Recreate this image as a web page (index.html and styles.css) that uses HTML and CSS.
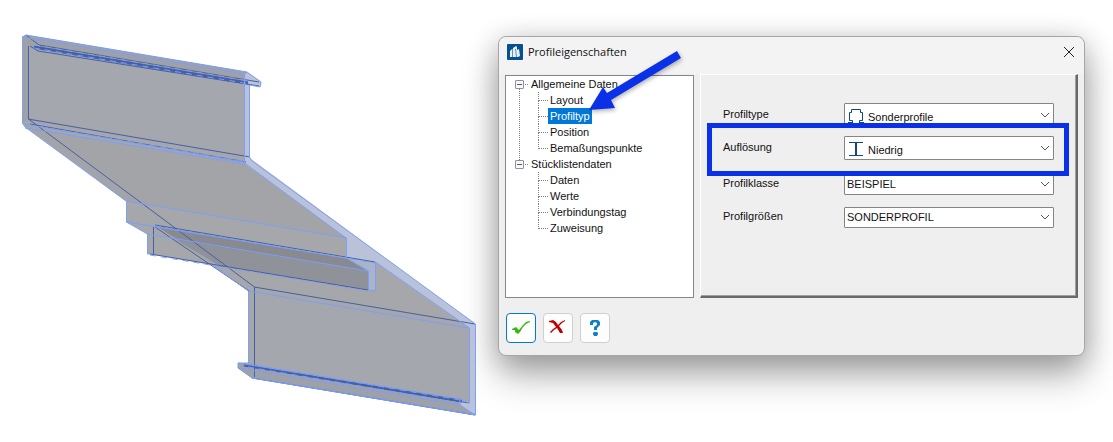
FILE: index.html
```html
<!DOCTYPE html>
<html lang="de">
<head>
    <meta charset="utf-8">
    <title>Profileigenschaften</title>
    <link rel="stylesheet" href="styles.css">
</head>
<body>
    <!-- 3D view of the profile -->
    <svg class="model" width="490" height="430" viewBox="0 0 490 430" role="img" aria-label="Sonderprofil">
        <!-- surfaces -->
        <path fill="#a5a7aa" d="M22 37L26 35L247 72L261 82L260 87L250 85V160L475 324V415L252 378L238 368V363L248 363V291L212 265L150 254H147V234L126 222V201L25 127L22 123Z"/>
        <path fill="#a4a7ae" d="M28 46L244 84V158L28 119ZM254 291L469 328V400L254 364Z"/>
        <path fill="#9fa1a4" d="M22 37L26 35L247 72L244 82L28 46V119L22 123ZM238 363L460 399L475 415L252 378L238 368Z"/>
        <path fill="#a2a4a7" d="M28 127L244 164L346 238L126 201Z"/>
        <path fill="#888a90" d="M156 226L346 258L368 271V290L220 266Z"/>
        <path fill="#909299" d="M176 240L368 271V290L220 266Z"/>
        <path fill="#b9c2d9" d="M244 75L247 72L261 82L260 87L250 85V158L475 324V415L460 405V399L469 403V328L375 262L346 258V238L244 163Z"/>
        <path fill="#a9b3cc" d="M346 258L375 262V291L368 290V271Z"/>
        <!-- hidden and inner edges -->
        <g class="edge-dark">
            <path d="M28.500 46V119L254.500 287V378M28 119L250 157M30 124L246 162M26 35L39 45L259 82"/>
            <path d="M30 46L38 51L259 86M153.500 254V226M155 225L375 262M150 254L368 290M155 227L249 291"/>
            <path d="M254 287L475 324M252 378L475 415M244 365L469 403"/>
        </g>
        <g class="bundle-dark">
            <path d="M34 47L248 83M244 365L462 401"/>
        </g>
        <!-- visible edges -->
        <g class="edge-light">
            <path d="M126 201L25 127L22.500 123V37L26 35L247 72L261 82L260 87L250 85M249.500 85V157L252 161L475.500 324V415L252 378L238 368V363L248.500 363V291L212 265"/>
            <path d="M22 37L244 74M244.500 74V163L346 238M24 124L244 162M25 128L246 164M247 72L244 75"/>
            <path d="M126.500 201V222L147.500 234V254H150M126 201L346.500 238V258L368.500 271V290L375.500 291V262L469.500 328V403M126 222L346 258M147 234L368 271"/>
            <path d="M249 291L469 328M238 363L460 399L469 403M238 368L460 405L475 415M460 399V405"/>
        </g>
        <g class="edge-dashed">
            <path d="M34 48L250 84M34 45L250 81M155 226L375 263M150 255L368 291M252 377L475 414M248 364L460 400M248 367L460 403M30 125L244 161"/>
        </g>
    </svg>

    <main class="dialog">
        <header class="titlebar">
            <svg class="logo" width="16" height="16" viewBox="0 0 16 16">
                <rect width="16" height="16" rx="1" fill="#07508f"/>
                <path fill="#e8f0f8" d="M3 13V7L5 5L6 6V4L9 2L10 3V6L12 5L13 12L11 13Z"/>
                <path fill="none" stroke="#5f8fbd" d="M5.500 6V13M8.500 5L9.500 13"/>
            </svg>
            <h1>Profileigenschaften</h1>
            <button type="button" class="close" aria-label="Schließen">
                <svg width="12" height="12" viewBox="0 0 12 12"><path d="M1 1L11 11M11 1L1 11"/></svg>
            </button>
        </header>

        <div class="content">
            <nav class="tree">
                <ul>
                    <li>
                        <button type="button" class="toggle" aria-label="Allgemeine Daten einklappen"></button><a href="#allgemein">Allgemeine Daten</a>
                        <ul>
                            <li><a href="#layout">Layout</a></li>
                            <li><a href="#profiltyp" class="selected">Profiltyp</a></li>
                            <li><a href="#position">Position</a></li>
                            <li><a href="#punkte">Bemaßungspunkte</a></li>
                        </ul>
                    </li>
                    <li>
                        <button type="button" class="toggle" aria-label="Stücklistendaten einklappen"></button><a href="#stueckliste">Stücklistendaten</a>
                        <ul>
                            <li><a href="#daten">Daten</a></li>
                            <li><a href="#werte">Werte</a></li>
                            <li><a href="#verbindungstag">Verbindungstag</a></li>
                            <li><a href="#zuweisung">Zuweisung</a></li>
                        </ul>
                    </li>
                </ul>
            </nav>

            <form class="panel">
                <div class="row">
                    <label for="profiltype">Profiltype</label>
                    <div class="combo with-icon">
                        <select id="profiltype"><option>Sonderprofile</option></select>
                        <svg class="profile-icon" width="16" height="16" viewBox="0 0 16 16"><path d="M0 14.500H5M4.500 14V12.500H1.500V4.500H3.500V1.500H12.500V4.500H14.500V12.500H11.500V14M11 14.500H16"/></svg>
                        <svg class="chevron" width="10" height="6" viewBox="0 0 10 6"><path d="M1 1L5 5L9 1"/></svg>
                    </div>
                </div>
                <div class="row highlight">
                    <label for="aufloesung">Auflösung</label>
                    <div class="combo with-icon">
                        <select id="aufloesung"><option>Niedrig</option></select>
                        <svg class="profile-icon" width="16" height="16" viewBox="0 0 16 16"><path d="M1 1.500H15M1 14.500H15"/><path stroke-width="2" d="M8 2V14"/></svg>
                        <svg class="chevron" width="10" height="6" viewBox="0 0 10 6"><path d="M1 1L5 5L9 1"/></svg>
                    </div>
                </div>
                <div class="row class-row">
                    <label for="profilklasse">Profilklasse</label>
                    <div class="combo">
                        <select id="profilklasse"><option>BEISPIEL</option></select>
                        <svg class="chevron" width="10" height="6" viewBox="0 0 10 6"><path d="M1 1L5 5L9 1"/></svg>
                    </div>
                </div>
                <div class="row">
                    <label for="profilgroessen">Profilgrößen</label>
                    <div class="combo">
                        <select id="profilgroessen"><option>SONDERPROFIL</option></select>
                        <svg class="chevron" width="10" height="6" viewBox="0 0 10 6"><path d="M1 1L5 5L9 1"/></svg>
                    </div>
                </div>
            </form>
        </div>

        <footer class="actions">
            <button type="button" class="ok" aria-label="OK">
                <svg width="20" height="20" viewBox="0 0 20 20"><path fill="#38b811" d="M1 11L5 9L8 12L12 7L15 4L19 3V4L15 6L12 9L9 14L7 16L4 14V12L1 12Z"/></svg>
            </button>
            <button type="button" aria-label="Abbrechen">
                <svg width="20" height="20" viewBox="0 0 20 20"><path fill="#c00000" d="M1 3L5 2L8 4L10 7L13 4L17 2V3L14 5L11 8L14 12L15 15H12L9 10L6 12L3 15L2 14L5 11L8 9L5 5L1 4Z"/></svg>
            </button>
            <button type="button" aria-label="Hilfe">
                <svg width="20" height="20" viewBox="0 0 20 20"><path fill="#0a82c4" d="M5 4L7 2H13L15 4V7L12 10V12H9V9L12 7V5L10 4L8 5V7H5ZM9 14H12L13 15V16L12 18H9L8 16V15Z"/></svg>
            </button>
        </footer>

        <!-- Pointer to the selected tree entry -->
        <svg class="arrow" width="96" height="64" viewBox="0 0 96 64">
            <path d="M1 62L15 39L19 45L89 3L93 10L23 52L27 60Z"/>
        </svg>
    </main>
</body>
</html>
```
FILE: styles.css
```css
* {
    box-sizing: border-box;
}
body {
    margin: 0;
    background-color: #ffffff;
    font-family: "Liberation Sans", Arial, sans-serif;
    font-size: 11px;
    line-height: 16px;
    color: #111111;
    display: flex;
    align-items: flex-start;
    overflow-x: hidden;
}
button {
    padding: 0;
    border: none;
    background: none;
}
/* 3D view */
.model {
    flex: none;
    position: relative;
    z-index: 1;
}
.edge-dark path,
.bundle-dark path,
.edge-light path,
.edge-dashed path {
    fill: none;
    stroke: #4560a8;
}
.bundle-dark path {
    stroke-width: 3;
}
.edge-light path {
    stroke: #7d9ff8;
}
.edge-dashed path {
    stroke: #7d9ff8;
    stroke-dasharray: 6 5;
}
/* Dialog window */
.dialog {
    position: relative;
    flex: 1;
    margin: 36px 28px 0 8px;
    padding: 0 6px 12px;
    background-color: #efefef;
    border: 1px solid #a6a6a6;
    border-radius: 8px;
    box-shadow: 0 20px 36px rgba(0, 0, 0, 0.3), 0 4px 28px rgba(0, 0, 0, 0.2);
}
.titlebar {
    display: flex;
    align-items: center;
    height: 37px;
    margin: 0 -6px;
    padding: 0 9px 8px 8px;
    background-color: #f3f3f3;
    border-radius: 8px 8px 0 0;
}
.titlebar h1 {
    flex: 1;
    margin: 0 0 0 5px;
    font-family: "Open Sans", sans-serif;
    font-size: 11px;
    font-weight: normal;
}
.logo {
    flex: none;
}
.close {
    display: flex;
}
.close path {
    stroke: #222222;
    stroke-width: 1;
}
.content {
    display: flex;
    gap: 6px;
    min-height: 224px;
}
/* Tree */
.tree {
    flex: 0 0 189px;
    margin-top: 1px;
    padding: 0 0 0 9px;
    background-color: #ffffff;
    border: 1px solid #828790;
}
.tree ul {
    margin: 0;
    padding: 0;
    list-style: none;
}
.tree li {
    position: relative;
}
.tree > ul > li {
    padding-left: 14px;
}
.tree > ul > li:first-child::before {
    content: "";
    position: absolute;
    left: 4px;
    top: 13px;
    bottom: -4px;
    border-left: 1px dotted #808080;
}
.tree a {
    display: inline-block;
    height: 16px;
    padding: 0 2px;
    color: inherit;
    text-decoration: none;
    vertical-align: top;
}
.tree a.selected {
    background-color: #0078d7;
    color: #ffffff;
}
.tree li li {
    height: 16px;
    padding-left: 19px;
}
.tree li li::before {
    content: "";
    position: absolute;
    left: 9px;
    top: 0;
    height: 8px;
    width: 9px;
    border-left: 1px dotted #808080;
    border-bottom: 1px dotted #808080;
}
.tree li li:not(:last-child)::after {
    content: "";
    position: absolute;
    left: 9px;
    top: 8px;
    height: 8px;
    border-left: 1px dotted #808080;
}
.toggle {
    position: absolute;
    left: 0;
    top: 4px;
    width: 9px;
    height: 9px;
    border: 1px solid #919191;
    border-radius: 1px;
    background: linear-gradient(#3c5fa8, #3c5fa8) center / 5px 1px no-repeat #f8f8f8;
}
.toggle::after {
    content: "";
    position: absolute;
    left: 9px;
    top: 3px;
    width: 3px;
    border-top: 1px dotted #808080;
}
/* Profile settings */
.panel {
    flex: 1;
    display: flex;
    flex-direction: column;
    gap: 9px;
    padding: 28px 22px 0 22px;
    border: 2px solid;
    border-width: 1px 2px 2px 1px;
    border-color: #ffffff #696969 #696969 #ffffff;
    box-shadow: inset -1px -1px #a0a0a0;
}
.row {
    position: relative;
    display: flex;
    align-items: center;
    height: 24px;
}
.class-row {
    margin-top: 3px;
}
.row label {
    flex: 0 0 121px;
    padding-bottom: 3px;
}
.combo {
    position: relative;
    flex: 1;
    display: flex;
    align-items: center;
}
.combo select {
    flex: 1;
    appearance: none;
    height: 21px;
    padding: 0 20px 0 2px;
    border: 1px solid #858585;
    border-radius: 1px;
    background-color: #ffffff;
    color: #111111;
    font: inherit;
}
.with-icon select {
    height: 24px;
    padding: 4px 20px 0 23px;
}
.profile-icon {
    position: absolute;
    left: 4px;
    top: 5px;
    fill: none;
    stroke: #104a75;
    pointer-events: none;
}
.chevron {
    position: absolute;
    right: 4px;
    fill: none;
    stroke: #555555;
    pointer-events: none;
}
.highlight::after {
    content: "";
    position: absolute;
    inset: -13px -15px -16px -16px;
    border: 5px solid #0a30e8;
    z-index: 1;
    pointer-events: none;
}
/* Buttons below the tree */
.actions {
    display: flex;
    gap: 7px;
    margin-top: 15px;
    padding-left: 1px;
}
.actions button {
    display: flex;
    align-items: center;
    justify-content: center;
    width: 30px;
    height: 30px;
    border: 1px solid #d0d0d0;
    border-radius: 4px;
    background-color: #fdfdfd;
}
.actions .ok {
    border-color: #0078d4;
}
.arrow {
    position: absolute;
    left: 89px;
    top: 11px;
    fill: #0a30e8;
    filter: drop-shadow(1px 2px 2px rgba(0, 0, 0, 0.3));
    pointer-events: none;
}
```
